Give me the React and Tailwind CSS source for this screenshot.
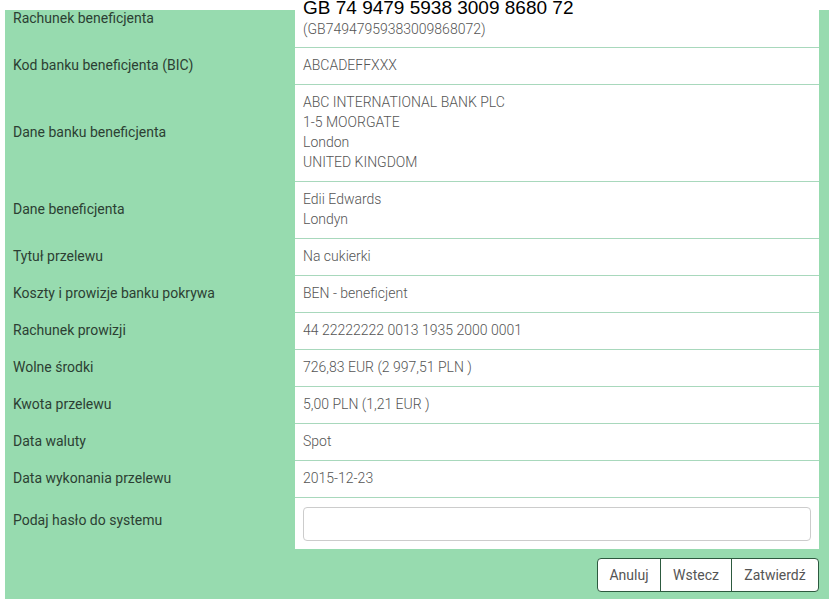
import React from 'react';

const rows = [
    { label: 'Kod banku beneficjenta (BIC)', value: ['ABCADEFFXXX'] },
    { label: 'Dane banku beneficjenta', value: ['ABC INTERNATIONAL BANK PLC', '1-5 MOORGATE', 'London', 'UNITED KINGDOM'] },
    { label: 'Dane beneficjenta', value: ['Edii Edwards', 'Londyn'] },
    { label: 'Tytuł przelewu', value: ['Na cukierki'] },
    { label: 'Koszty i prowizje banku pokrywa', value: ['BEN - beneficjent'] },
    { label: 'Rachunek prowizji', value: ['44 22222222 0013 1935 2000 0001'] },
    { label: 'Wolne środki', value: ['726,83 EUR (2 997,51 PLN )'] },
    { label: 'Kwota przelewu', value: ['5,00 PLN (1,21 EUR )'] },
    { label: 'Data waluty', value: ['Spot'] },
    { label: 'Data wykonania przelewu', value: ['2015-12-23'] },
];

function Row({ label, children }) {
    return (
        <div className="flex">
            <div className="w-[290px] shrink-0 pl-2 pr-2 pb-[3px] flex items-center text-[14px] leading-5 text-[#2c3f33]">
                {label}
            </div>
            <div className="w-[524px] shrink-0 bg-white border-b border-[#a8d8bc] px-2 pt-[7px] pb-[9px] text-[14px] leading-5 text-[#555] font-light">
                {children}
            </div>
        </div>
    );
}

export default function App() {
    return (
        <div className="h-screen overflow-hidden bg-white pt-[10px] pl-[5px]" style={{ fontFamily: 'Roboto, "Liberation Sans", sans-serif' }}>
            <div className="w-[824px] bg-[#97dbaf] pr-[10px] pb-[7px]">
                <div className="flex">
                    <div className="w-[290px] shrink-0 pl-2 pr-2 text-[14px] leading-5 text-[#2c3f33]">
                        <div className="-mt-[2px]">Rachunek beneficjenta</div>
                    </div>
                    <div className="w-[524px] shrink-0 bg-white border-b border-[#a8d8bc] px-2 pb-2 text-[14px] leading-5 text-[#555] font-light">
                        <div className="-mt-[12px] h-[20px] text-[19px] leading-[20px] text-black font-normal" style={{ fontFamily: '"Liberation Sans", Arial, sans-serif' }}>
                            GB 74 9479 5938 3009 8680 72
                        </div>
                        <div className="mt-[1px]">(GB74947959383009868072)</div>
                    </div>
                </div>
                {rows.map((r) => (
                    <Row key={r.label} label={r.label}>
                        {r.value.map((v) => (
                            <div key={v}>{v}</div>
                        ))}
                    </Row>
                ))}
                <div className="flex">
                    <div className="w-[290px] shrink-0 pl-2 pr-2 pt-3 text-[14px] leading-5 text-[#2c3f33]">
                        Podaj hasło do systemu
                    </div>
                    <div className="w-[524px] shrink-0 bg-white px-2 pt-[9px] pb-2">
                        <input type="password" className="block w-full h-[34px] border border-[#ccc] rounded-[4px] bg-white outline-none px-3" />
                    </div>
                </div>
                <div className="flex justify-end mt-[9px]">
                    <div className="flex h-[34px] border border-[#2d5a3f] rounded-[4px] bg-white text-[14px] text-[#555] overflow-hidden">
                        <button className="w-[63px] border-r border-[#2d5a3f]">Anuluj</button>
                        <button className="w-[71px] border-r border-[#2d5a3f]">Wstecz</button>
                        <button className="w-[86px]">Zatwierdź</button>
                    </div>
                </div>
            </div>
        </div>
    );
}
